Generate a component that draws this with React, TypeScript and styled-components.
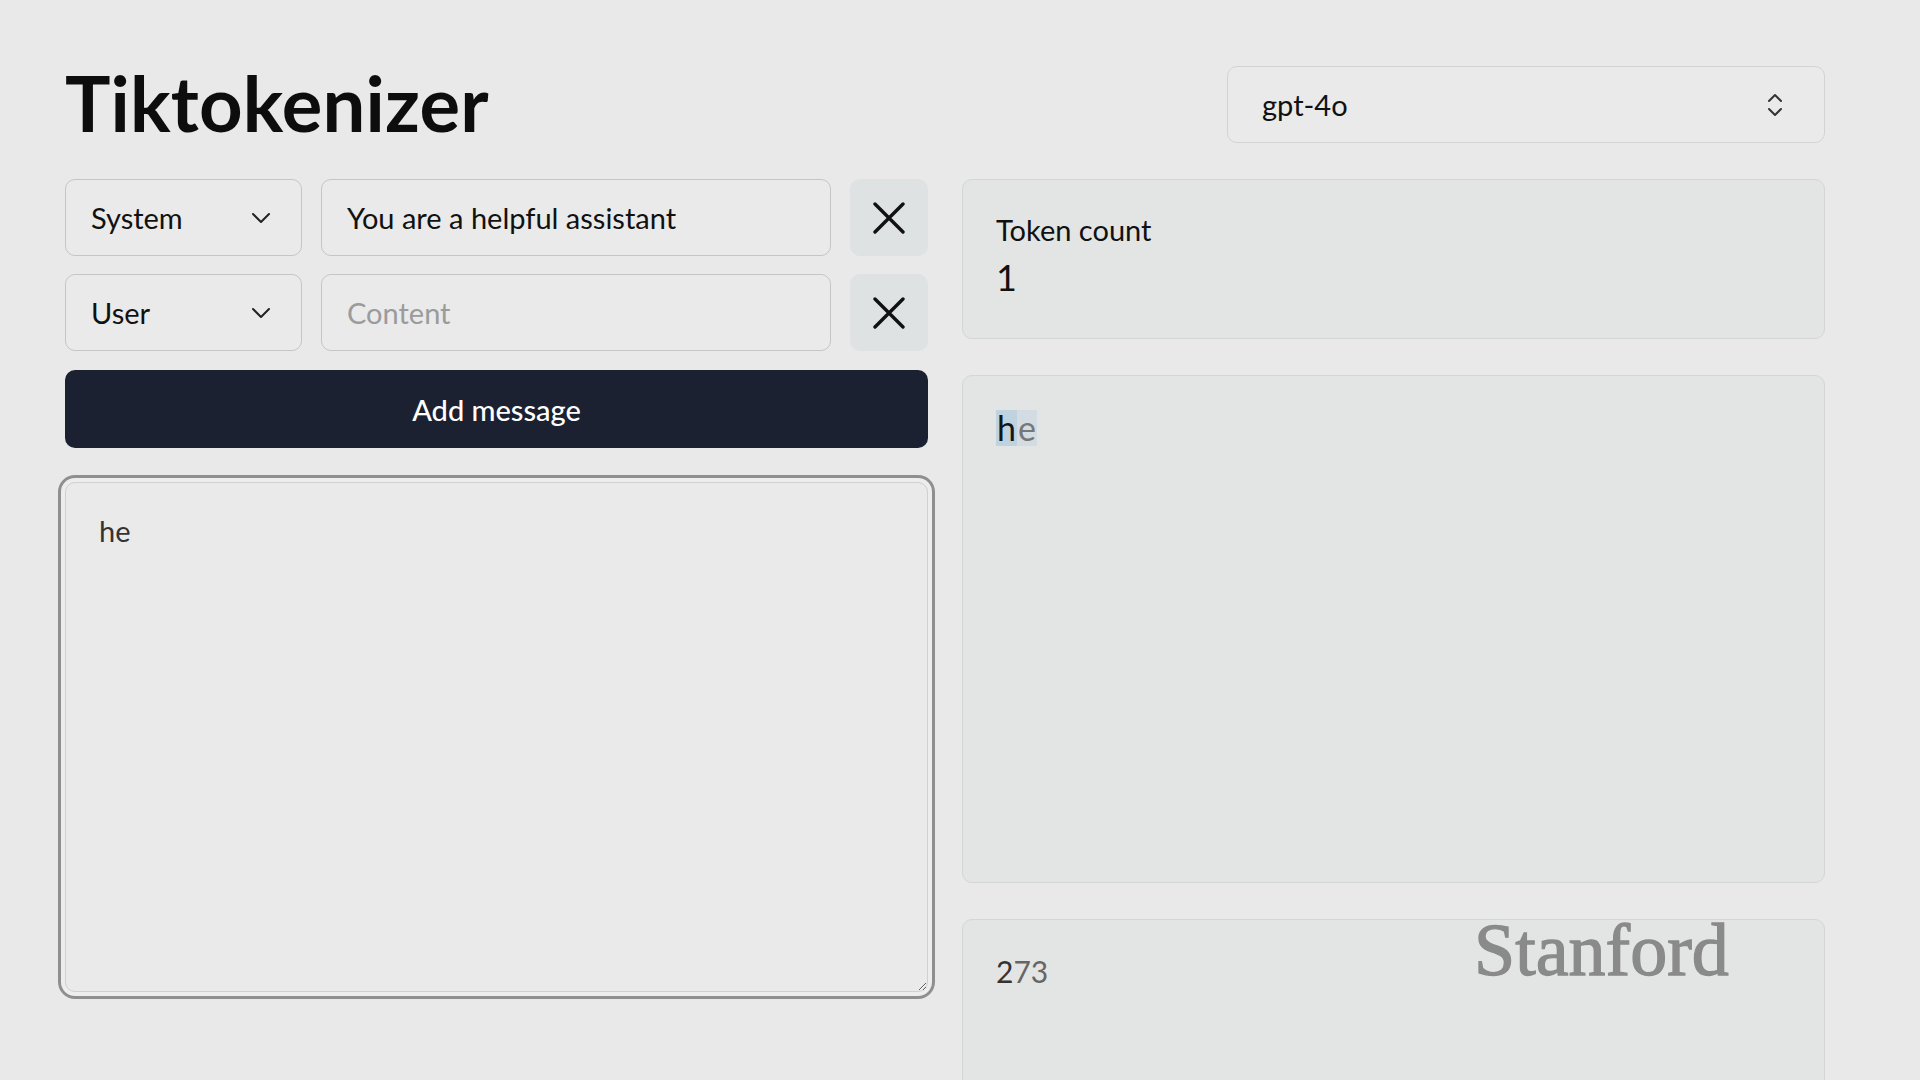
import React from "react";
import styled, { createGlobalStyle } from "styled-components";

const GlobalStyle = createGlobalStyle`
  html, body {
    margin: 0;
    padding: 0;
    background: #e8e9e8;
  }
  body {
    font-family: Lato, "Open Sans", sans-serif;
    color: #111;
  }
  * {
    box-sizing: border-box;
  }
`;

const messages = [
  { role: "System", content: "You are a helpful assistant" },
  { role: "User", content: "" },
];

const ChevronDown = () => (
  <svg width="20" height="12" viewBox="0 0 20 12" fill="none">
    <path d="M2 2l8 8 8-8" stroke="#222" strokeWidth="2" strokeLinecap="round" strokeLinejoin="round" />
  </svg>
);

const ChevronsUpDown = () => (
  <svg width="18" height="28" viewBox="0 0 18 28" fill="none">
    <path d="M3 10l6-6 6 6M3 18l6 6 6-6" stroke="#333" strokeWidth="2" strokeLinecap="round" strokeLinejoin="round" />
  </svg>
);

const CloseIcon = () => (
  <svg width="32" height="32" viewBox="0 0 32 32" fill="none">
    <path d="M2 2l28 28M30 2L2 30" stroke="#111" strokeWidth="3.4" strokeLinecap="round" />
  </svg>
);

export default function App() {
  return (
    <>
      <GlobalStyle />
      <Page>
        <Header>
          <Title>Tiktokenizer</Title>
          <ModelSelect>
            <span>gpt-4o</span>
            <ChevronsUpDown />
          </ModelSelect>
        </Header>
        <Columns>
          <LeftColumn>
            {messages.map((m, i) => (
              <MessageRow key={i}>
                <RoleSelect>
                  <span>{m.role}</span>
                  <ChevronDown />
                </RoleSelect>
                <ContentInput defaultValue={m.content} placeholder="Content" />
                <RemoveButton>
                  <CloseIcon />
                </RemoveButton>
              </MessageRow>
            ))}
            <AddButton>Add message</AddButton>
            <Editor defaultValue="he" spellCheck={false} />
          </LeftColumn>
          <RightColumn>
            <Card $height={160}>
              <Label>Token count</Label>
              <Count>1</Count>
            </Card>
            <Card $height={508}>
              <Tokens>
                <Token $strong>h</Token>
                <Token>e</Token>
              </Tokens>
            </Card>
            <Card $height={200}>
              <Ids>
                2<span>73</span>
              </Ids>
            </Card>
          </RightColumn>
        </Columns>
      </Page>
      <Watermark>Stanford</Watermark>
    </>
  );
}

const Page = styled.div`
  width: 1825px;
  padding: 66px 0 40px 65px;
`;

const Header = styled.header`
  display: flex;
  align-items: center;
  justify-content: space-between;
  height: 77px;
`;

const Title = styled.h1`
  margin: 0;
  font-size: 76px;
  font-weight: 700;
  letter-spacing: 0.2px;
  color: #0d0d0d;
  line-height: 1;
  margin-top: -4px;
`;

const ModelSelect = styled.div`
  width: 598px;
  height: 77px;
  display: flex;
  align-items: center;
  justify-content: space-between;
  padding: 0 40px 0 34px;
  border: 1.5px solid #d2d3d2;
  border-radius: 10px;
  background: #e9eae9;
  font-size: 29px;
`;

const Columns = styled.div`
  display: grid;
  grid-template-columns: 863px 863px;
  column-gap: 34px;
  margin-top: 36px;
  align-items: start;
`;

const LeftColumn = styled.div`
  display: flex;
  flex-direction: column;
  gap: 18px;
`;

const RightColumn = styled.div`
  display: flex;
  flex-direction: column;
  gap: 36px;
`;

const MessageRow = styled.div`
  display: grid;
  grid-template-columns: 237px 510px 78px;
  column-gap: 19px;
  height: 77px;
`;

const RoleSelect = styled.div`
  display: flex;
  align-items: center;
  justify-content: space-between;
  padding: 0 30px 0 25px;
  border: 1.5px solid #c4c5c4;
  border-radius: 10px;
  background: #e9eae9;
  font-size: 29px;
`;

const ContentInput = styled.input`
  height: 77px;
  padding: 0 25px;
  border: 1.5px solid #c4c5c4;
  border-radius: 10px;
  background: #e9eae9;
  font-family: Lato, "Open Sans", sans-serif;
  font-size: 29px;
  color: #111;
  outline: none;
  &::placeholder {
    color: #9a9b9b;
  }
`;

const RemoveButton = styled.button`
  display: flex;
  align-items: center;
  justify-content: center;
  border: none;
  border-radius: 10px;
  background: #dfe2e2;
  padding: 0;
  cursor: pointer;
`;

const AddButton = styled.button`
  height: 78px;
  margin-top: 1px;
  border: none;
  border-radius: 10px;
  background: #1b2130;
  color: #fff;
  font-family: Lato, "Open Sans", sans-serif;
  font-size: 29px;
  font-weight: 500;
  cursor: pointer;
`;

const Editor = styled.textarea`
  margin-top: 16px;
  height: 510px;
  padding: 26px 33px;
  border: 1.5px solid #cfd0cf;
  border-radius: 10px;
  background: #e9eae9;
  font-family: Lato, "Open Sans", sans-serif;
  font-size: 29px;
  line-height: 1.5;
  color: #333;
  outline: none;
  box-shadow: 0 0 0 4px #ecedec, 0 0 0 7px #8e8f8e;
  resize: vertical;
`;

const Card = styled.div<{ $height: number }>`
  height: ${(p) => p.$height}px;
  padding: 28px 33px;
  border: 1.5px solid #d4d6d5;
  border-radius: 10px;
  background: #e3e5e4;
`;

const Label = styled.div`
  font-size: 29px;
  line-height: 1.5;
  color: #111;
`;

const Count = styled.div`
  margin-top: 2px;
  font-size: 36px;
  line-height: 1.3;
  color: #111;
`;

const Tokens = styled.div`
  display: flex;
  margin-top: 6px;
  font-size: 34px;
  line-height: 36px;
`;

const Token = styled.span<{ $strong?: boolean }>`
  padding: 0 1px;
  background: ${(p) => (p.$strong ? "#bfd2df" : "#d3dce2")};
  color: ${(p) => (p.$strong ? "#151515" : "#777")};
`;

const Ids = styled.div`
  margin-top: 5px;
  font-size: 30px;
  color: #333;
  span {
    color: #666;
  }
`;

const Watermark = styled.div`
  position: fixed;
  left: 1474px;
  top: 913px;
  font-family: "Liberation Serif", "DejaVu Serif", serif;
  font-size: 74px;
  line-height: 1;
  color: #8a8a8a;
  -webkit-text-stroke: 1.3px #8a8a8a;
  pointer-events: none;
`;
